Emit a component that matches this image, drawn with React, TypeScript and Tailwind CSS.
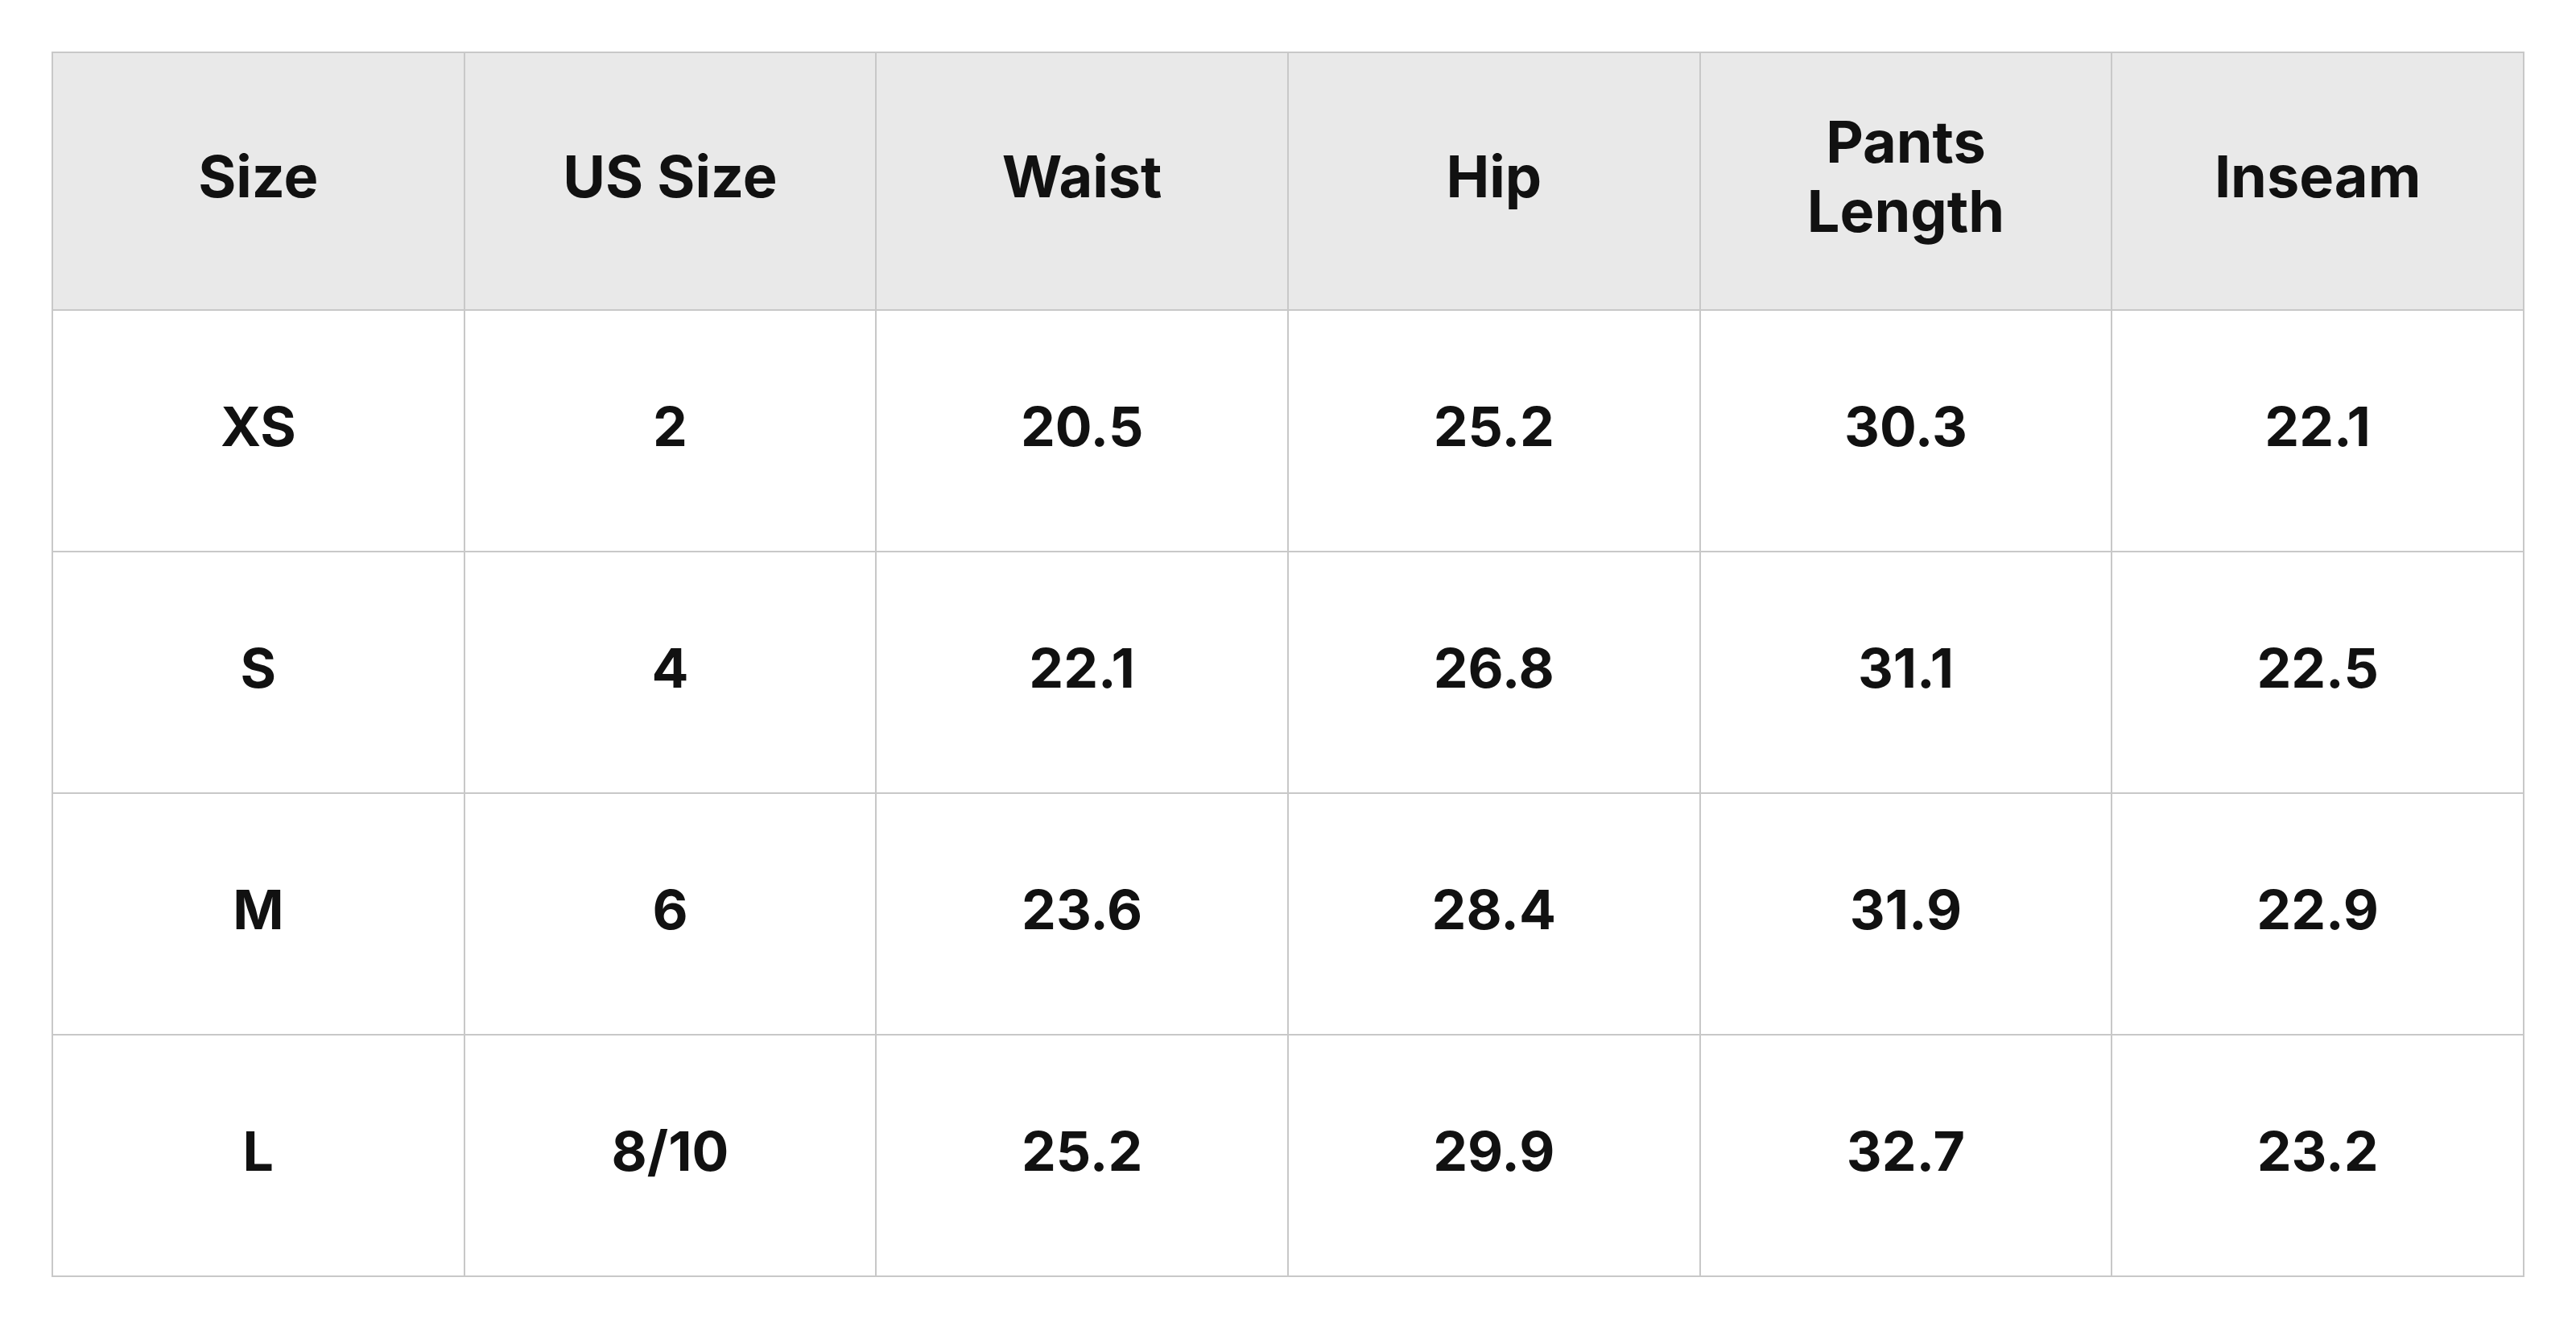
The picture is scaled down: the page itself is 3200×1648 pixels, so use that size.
const headers = ['Size', 'US Size', 'Waist', 'Hip', 'Pants Length', 'Inseam']

// Rows of the size chart, in inches.
const rows = [
  ['XS', '2', '20.5', '25.2', '30.3', '22.1'],
  ['S', '4', '22.1', '26.8', '31.1', '22.5'],
  ['M', '6', '23.6', '28.4', '31.9', '22.9'],
  ['L', '8/10', '25.2', '29.9', '32.7', '23.2'],
]

export default function App() {
  return (
    <div className="min-h-screen bg-white p-16 font-['Inter',sans-serif] text-[#111111]">
      <table className="w-full table-fixed border-collapse border-2 border-[#c8c8c8] text-center">
        <thead className="bg-[#e9e9e9]">
          <tr className="h-[320px]">
            {headers.map((h) => (
              <th
                key={h}
                className="border-2 border-[#c8c8c8] px-24 pb-3 text-[72px] leading-[86px] font-bold"
              >
                {h}
              </th>
            ))}
          </tr>
        </thead>
        <tbody>
          {rows.map((row) => (
            <tr key={row[0]} className="h-[300px]">
              {row.map((cell, i) => (
                <td key={i} className="border-2 border-[#c8c8c8] pb-3 text-[68px] font-bold">
                  {cell}
                </td>
              ))}
            </tr>
          ))}
        </tbody>
      </table>
    </div>
  )
}
